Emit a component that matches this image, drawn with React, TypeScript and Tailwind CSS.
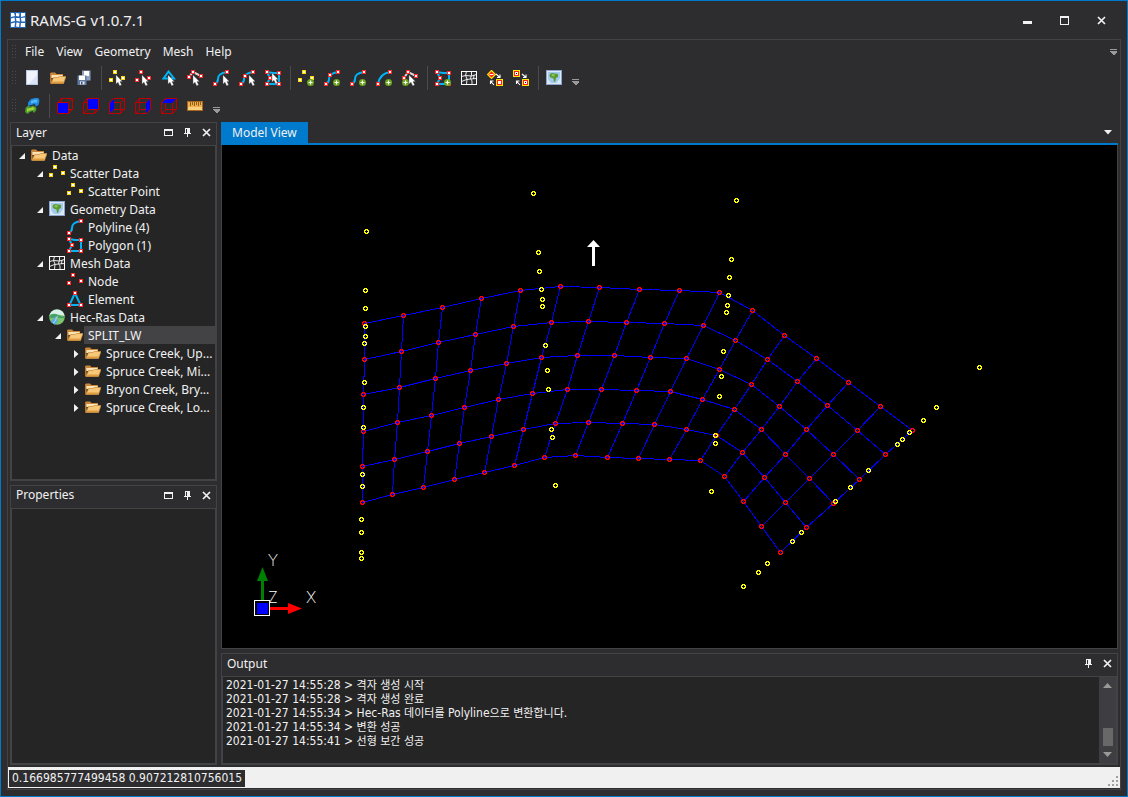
import React from "react";

type Point = [number, number];

const RED = "#ff2a2a";
const YELLOW = "#ffd700";
const CYAN = "#00b4f5";

// rows of mesh nodes, from the outer bank to the inner bank
const meshRows: Point[][] = [
  [[364, 323], [403, 315], [442, 307], [481, 298], [520, 290], [560, 286], [599, 287], [639, 289], [679, 290], [719, 292], [752, 310], [784, 335], [816, 358], [848, 382], [880, 406], [912, 430]],
  [[364, 359], [401, 351], [438, 342], [475, 334], [513, 326], [551, 322], [588, 321], [626, 322], [664, 323], [703, 325], [735, 340], [767, 359], [797, 381], [827, 405], [857, 430], [885, 454]],
  [[363, 394], [399, 387], [435, 378], [470, 370], [506, 363], [541, 357], [577, 355], [614, 355], [650, 357], [686, 358], [719, 369], [751, 384], [779, 406], [806, 429], [833, 454], [859, 479]],
  [[363, 431], [397, 422], [431, 415], [464, 407], [498, 399], [532, 393], [567, 389], [601, 389], [636, 390], [670, 391], [702, 399], [734, 409], [761, 429], [785, 454], [809, 478], [833, 503]],
  [[362, 466], [394, 459], [427, 451], [459, 443], [491, 436], [523, 429], [555, 423], [588, 422], [622, 423], [654, 424], [686, 429], [716, 435], [742, 452], [764, 477], [785, 502], [806, 527]],
  [[362, 502], [392, 494], [423, 487], [454, 479], [484, 472], [514, 465], [544, 457], [575, 455], [607, 457], [638, 458], [669, 459], [700, 460], [724, 476], [743, 501], [761, 526], [780, 552]],
];

const scatterPoints: Point[] = [
  [366, 231], [365, 290], [365, 308], [365, 326], [365, 336], [364, 343], [364, 382], [363, 407], [363, 427],
  [362, 474], [362, 486], [361, 519], [361, 532], [361, 552], [361, 558],
  [533, 193], [538, 252], [539, 271], [541, 289], [542, 299], [542, 306], [545, 345], [547, 370], [548, 389],
  [551, 429], [552, 437], [555, 485],
  [736, 200], [731, 259], [729, 277], [728, 295], [727, 305], [726, 312], [723, 351], [721, 376], [719, 396],
  [715, 435], [715, 443], [711, 491],
  [979, 367], [936, 407], [923, 420], [909, 432], [902, 439], [897, 444], [868, 470], [850, 487], [835, 501],
  [801, 532], [792, 541], [767, 563], [758, 572], [743, 586],
];

const toPoints = (line: Point[]) => line.map(([x, y]) => `${x + 0.5},${y + 0.5}`).join(" ");

/* ---------- icon parts ---------- */

const Svg = ({ children }: { children: React.ReactNode }) => (
  <svg viewBox="0 0 16 16" className="size-4 shrink-0" aria-hidden="true">
    {children}
  </svg>
);

const Dots = ({ at, color }: { at: Point[]; color: string }) => (
  <g shapeRendering="crispEdges">
    {at.map(([x, y]) => (
      <g key={`${x}-${y}`}>
        <rect x={x - 2} y={y - 2} width="4" height="4" fill={color} />
        <rect x={x - 1} y={y - 1} width="2" height="2" fill="#fff" />
      </g>
    ))}
  </g>
);

const Cursor = ({ x, y }: { x: number; y: number }) => (
  <path
    transform={`translate(${x} ${y})`}
    d="M0 0V9L2 7.3L3.6 10.8L5.6 10L4 6.6H6.4Z"
    fill="#fff"
    stroke="#555"
    strokeWidth="0.4"
  />
);

const Plus = ({ x = 12 }: { x?: number }) => (
  <g>
    <circle cx={x + 0.5} cy="12.5" r="3.5" fill="#69a51c" />
    <path d={`M${x + 0.5} 10.5V14.5M${x - 1.5} 12.5H${x + 2.5}`} stroke="#fff" strokeWidth="1.2" />
  </g>
);

const Line = ({ d, color = CYAN }: { d: string; color?: string }) => (
  <path d={d} fill="none" stroke={color} strokeWidth="2" />
);

const S_CURVE = "M2 14C4 13 5 12 5 9C5 5 7 3 14 2";
const POLYGON = "M2 2L8 3L14 3V14H2L5 8Z";
const scatterAt: Point[] = [[6, 2], [2, 10], [14, 8]];
const polygonAt: Point[] = [[2, 2], [14, 3], [5, 8], [2, 14], [14, 14]];

const FolderIcon = () => (
  <Svg>
    <path d="M0 3.5L1 2.5H5L6.5 4H13V7H0Z" fill="#c9873c" />
    <path d="M1 5H12.5V8H1Z" fill="#fbe3b4" />
    <path d="M0 3.5V13.5H2L1.3 5Z" fill="#b9762e" />
    <path d="M3.5 7.5H8L9.5 6.5H16L13.5 13.5H1Z" fill="#f6c877" stroke="#c88a3b" strokeWidth="0.7" />
    <path d="M2.5 11.5H14L13.4 13.2H1.6Z" fill="#df9c41" />
  </Svg>
);

const ScatterIcon = () => (
  <Svg>
    <Dots at={scatterAt} color={YELLOW} />
  </Svg>
);

const MapIcon = () => (
  <Svg>
    <rect x="0.5" y="0.5" width="15" height="14" fill="#dfe9f5" stroke="#8ba5cc" />
    <rect x="2" y="2" width="12" height="11" fill="#a3c9ec" />
    <path d="M2 9L5 13H2ZM10 13L14 8V13Z" fill="#cfe8fa" />
    <path d="M4 4L6 3L9 3.5L12 4L12 7L10 8L9.5 11L8 12L7.5 8.5L4.5 7.5L3.5 6Z" fill="#5b9c31" />
    <path d="M6 4L9 4.5L8 6.5L5.5 6Z" fill="#93c258" />
  </Svg>
);

const PolylineIcon = () => (
  <Svg>
    <Line d={S_CURVE} />
    <Dots at={[[2, 14], [14, 2]]} color={RED} />
  </Svg>
);

const PolygonIcon = () => (
  <Svg>
    <Line d={POLYGON} />
    <Dots at={polygonAt} color={RED} />
  </Svg>
);

const MeshIcon = () => (
  <Svg>
    <rect x="0.5" y="1.5" width="15" height="13" fill="none" stroke="#fff" />
    <path
      d="M5.5 1.5L4.5 5.5L6 9L5.5 14.5M10.5 1.5V5L9.5 8.5L11 11V14.5M0.5 6.5L4.5 5.5L10.5 6L15.5 4.5M0.5 11.5L5.5 9.5L9.5 9L15.5 8.5M13 5L12.5 9"
      fill="none"
      stroke="#fff"
      strokeWidth="0.9"
    />
  </Svg>
);

const NodeIcon = () => (
  <Svg>
    <Dots at={scatterAt} color={RED} />
  </Svg>
);

const ElementIcon = () => (
  <Svg>
    <Line d="M8 2L2.5 14H13.5Z" />
    <Dots at={[[8, 2], [2, 14], [14, 14]]} color={RED} />
  </Svg>
);

const RiverIcon = () => (
  <Svg>
    <circle cx="8" cy="8" r="7.8" fill="#7cc36e" />
    <path d="M0.3 7A7.8 7.8 0 0 1 15.7 7Q8 4 0.3 7Z" fill="#d9f1ea" />
    <path d="M1 6Q5 3.5 9 6T15.6 6.5V9H0.5Z" fill="#46a360" />
    <path d="M11.5 7Q6 8 8 10T6 15.7L1.5 12.5Q5 10 5.5 8.5T11.5 7Z" fill="#59a9e0" />
    <path d="M9 7.6Q6.5 8.5 7 10T4 14.2" fill="none" stroke="#cdeaff" strokeWidth="0.8" />
  </Svg>
);

const NewIcon = () => (
  <Svg>
    <rect x="2.5" y="0.5" width="11" height="14" fill="#f1f5fd" stroke="#b9c9e6" />
    <path d="M5 14L13 5V14Z" fill="#dbe4f6" />
  </Svg>
);

const SaveIcon = () => (
  <Svg>
    <path d="M6 0.5H14.5V10.5H6Z" fill="#8ea0c0" />
    <rect x="8" y="1" width="5" height="5" fill="#fff" />
    <path d="M1.5 5.5H10.5V15H1.5Z" fill="#61789f" />
    <rect x="3" y="5.5" width="6" height="4.5" fill="#fff" />
    <rect x="4" y="11.5" width="4.5" height="3" fill="#dfe6f2" />
    <rect x="5" y="12" width="1.5" height="2.5" fill="#3d4e6e" />
  </Svg>
);

const SelectScatterIcon = () => (
  <Svg>
    <Dots at={scatterAt} color={YELLOW} />
    <Cursor x={7} y={5} />
  </Svg>
);

const SelectNodeIcon = () => (
  <Svg>
    <Dots at={scatterAt} color={RED} />
    <Cursor x={7} y={5} />
  </Svg>
);

const SelectElementIcon = () => (
  <Svg>
    <Line d="M7.5 1.5L2.5 8.5H13Z" />
    <Cursor x={7} y={5} />
  </Svg>
);

const SelectEdgeIcon = () => (
  <Svg>
    <Line d="M2 7L6 2L14 6" color="#d5d5d5" />
    <Dots at={[[2, 7], [6, 2], [14, 6]]} color={RED} />
    <Cursor x={6} y={5} />
  </Svg>
);

const SelectPolylineIcon = () => (
  <Svg>
    <Line d={S_CURVE} />
    <Dots at={[[2, 14], [14, 2]]} color={RED} />
    <Cursor x={10} y={5} />
  </Svg>
);

const SelectVertexIcon = () => (
  <Svg>
    <Line d={S_CURVE} />
    <Dots at={[[2, 14], [6, 6], [14, 2]]} color={RED} />
    <Cursor x={10} y={5} />
  </Svg>
);

const SelectPolygonIcon = () => (
  <Svg>
    <Line d={POLYGON} />
    <Dots at={polygonAt} color={RED} />
    <Cursor x={7} y={3} />
  </Svg>
);

const AddScatterIcon = () => (
  <Svg>
    <Dots at={scatterAt} color={YELLOW} />
    <Plus />
  </Svg>
);

const AddVertexIcon = () => (
  <Svg>
    <Line d={S_CURVE} />
    <Dots at={[[2, 14], [6, 5], [14, 2]]} color={RED} />
    <Plus />
  </Svg>
);

const AddPolylineIcon = () => (
  <Svg>
    <Line d={S_CURVE} />
    <Dots at={[[2, 14], [14, 2]]} color={RED} />
    <Plus />
  </Svg>
);

const AddArcIcon = () => (
  <Svg>
    <Line d="M2 14C3 8 7 3 14 2" />
    <Dots at={[[2, 14], [14, 2]]} color={RED} />
    <Plus />
  </Svg>
);

const AddEdgeIcon = () => (
  <Svg>
    <Line d="M2 8L6 2L14 6" color="#d5d5d5" />
    <Dots at={[[2, 8], [6, 2], [14, 6]]} color={RED} />
    <Plus x={3} />
    <Cursor x={7} y={5} />
  </Svg>
);

const AddPolygonIcon = () => (
  <Svg>
    <Line d={POLYGON} />
    <Dots at={polygonAt} color={RED} />
    <Plus />
  </Svg>
);

const SwapArrows = () => (
  <path
    d="M9 4L13 7.5M13 4.5V7.5H10M7 15L3.5 11M3.5 14V11H6.5"
    fill="none"
    stroke="#fff"
    strokeWidth="1.1"
  />
);

const ElementToSquareIcon = () => (
  <Svg>
    <path d="M4.5 0.5L8.5 4.5L4.5 8.5L0.5 4.5Z" fill="#ff2020" stroke="#ffe600" strokeWidth="1.2" />
    <path d="M2.5 4.5H6.5" stroke="#fff" />
    <SwapArrows />
    <rect x="9.5" y="9.5" width="6" height="6" fill="#fff" stroke="#ffe600" />
    <rect x="10.5" y="10.5" width="4" height="4" fill="none" stroke="#ff2020" />
  </Svg>
);

const SquareToSquareIcon = () => (
  <Svg>
    <g shapeRendering="crispEdges">
      <rect x="0.5" y="0.5" width="6" height="6" fill="#fff" stroke="#ffe600" />
      <rect x="1.5" y="1.5" width="4" height="4" fill="none" stroke="#ff2020" />
      <rect x="3" y="3" width="1" height="1" fill="#000" />
      <rect x="9.5" y="9.5" width="6" height="6" fill="#fff" stroke="#ffe600" />
      <rect x="10.5" y="10.5" width="4" height="4" fill="none" stroke="#ff2020" />
      <rect x="12" y="12" width="1" height="1" fill="#000" />
    </g>
    <SwapArrows />
  </Svg>
);

const TerrainIcon = () => (
  <Svg>
    <path d="M4 4.5L7 1L11 0H14.5L15.5 3L14.5 7L12 8.5L10.5 6L7.5 7L4 8Z" fill="#1b8be0" />
    <path d="M7 3L11 1.5L13.5 2L13 5L10.5 4.5L7 5.5Z" fill="#58b6f4" />
    <path d="M1.5 10L3.5 8L7 8.5L9 7.5L12 9L12.5 12L10 15L8.5 13L6 14L3.5 16L1 14Z" fill="#4d9a2c" />
    <path d="M3 10.5L6.5 10L9 9L11 11L9 12L6 12.5L3 14Z" fill="#a4d23f" />
  </Svg>
);

const cubeFaces = {
  front: "M1 5H11V15H1Z",
  back: "M5 1H15V11H5Z",
  left: "M1 5L5 1V11L1 15Z",
  right: "M11 5L15 1V11L11 15Z",
  top: "M1 5L5 1H15L11 5Z",
};

const CubeIcon = ({ face }: { face: keyof typeof cubeFaces }) => (
  <Svg>
    <path
      d="M0.5 4.5H11.5V15.5H0.5ZM4.5 0.5H15.5V11.5H4.5ZM0.5 4.5L4.5 0.5M11.5 4.5L15.5 0.5M11.5 15.5L15.5 11.5M0.5 15.5L4.5 11.5"
      fill="none"
      stroke="#c00000"
    />
    <path d={cubeFaces[face]} fill="#0000ff" />
  </Svg>
);

const RulerIcon = () => (
  <Svg>
    <rect x="0.5" y="3.5" width="15" height="9" fill="#eeb04c" stroke="#a9681c" />
    <rect x="1" y="9" width="14" height="3" fill="#f9d080" />
    <path d="M3.5 4V8M5.5 4V7M7.5 4V8M9.5 4V7M11.5 4V8M13.5 4V7" stroke="#8a5414" strokeWidth="0.9" />
  </Svg>
);

const AppIcon = () => (
  <Svg>
    <rect width="16" height="16" fill="#2465b5" />
    <path
      d="M1 1H4L5 4L1 5ZM6 1L9.5 1.5L9 4.500L6 4ZM11 1H15V4L11 5ZM1 6.500L4.500 5.500L5 9L1 10ZM6 6L9.500 6L10 9.500L6.500 9ZM11 6L15 5.500V9.500L11.500 9.500ZM1 11.500L5 10.500L4.500 15H1ZM6.500 10.500L9.500 11L9 15L6 14.500ZM11 11L15 11V15H10.500Z"
      fill="#fff"
    />
  </Svg>
);

/* ---------- small window glyphs ---------- */

const CloseGlyph = () => (
  <svg viewBox="0 0 9 9" className="size-[9px]" aria-hidden="true">
    <path d="M1 1L8 8M8 1L1 8" stroke="#f1f1f1" strokeWidth="1.7" />
  </svg>
);

const MaximizeGlyph = () => (
  <svg viewBox="0 0 9 9" className="size-[9px]" shapeRendering="crispEdges" aria-hidden="true">
    <path d="M0 0H9V9H0ZM1 2V8H8V2Z" fill="#f1f1f1" fillRule="evenodd" />
  </svg>
);

const MinimizeGlyph = () => (
  <svg viewBox="0 0 9 9" className="size-[9px]" shapeRendering="crispEdges" aria-hidden="true">
    <path d="M0 5H9V8H0Z" fill="#f1f1f1" />
  </svg>
);

const RestoreGlyph = () => (
  <svg viewBox="0 0 9 9" className="size-[9px]" shapeRendering="crispEdges" aria-hidden="true">
    <path d="M0 1H9V8H0ZM1 3V7H8V3Z" fill="#f1f1f1" fillRule="evenodd" />
  </svg>
);

const PinGlyph = () => (
  <svg viewBox="0 0 9 9" className="size-[9px]" shapeRendering="crispEdges" aria-hidden="true">
    <path d="M2 0H7V5H8V6H5V9H4V6H1V5H2ZM3 1V5H4V1Z" fill="#f1f1f1" fillRule="evenodd" />
  </svg>
);

const OverflowGlyph = () => (
  <svg viewBox="0 0 7 7" className="size-[7px]" shapeRendering="crispEdges" aria-hidden="true">
    <path d="M0 0H7V1H0ZM0 2H7V3L4 6H3L0 3Z" fill="#999" />
  </svg>
);

/* ---------- toolbars ---------- */

type Tool = { label: string; icon: React.ReactNode };

const mainTools: Tool[][] = [
  [
    { label: "New", icon: <NewIcon /> },
    { label: "Open", icon: <FolderIcon /> },
    { label: "Save", icon: <SaveIcon /> },
  ],
  [
    { label: "Select scatter point", icon: <SelectScatterIcon /> },
    { label: "Select node", icon: <SelectNodeIcon /> },
    { label: "Select element", icon: <SelectElementIcon /> },
    { label: "Select edge", icon: <SelectEdgeIcon /> },
    { label: "Select polyline", icon: <SelectPolylineIcon /> },
    { label: "Select vertex", icon: <SelectVertexIcon /> },
    { label: "Select polygon", icon: <SelectPolygonIcon /> },
  ],
  [
    { label: "Add scatter point", icon: <AddScatterIcon /> },
    { label: "Add vertex", icon: <AddVertexIcon /> },
    { label: "Add polyline", icon: <AddPolylineIcon /> },
    { label: "Add arc", icon: <AddArcIcon /> },
    { label: "Add edge", icon: <AddEdgeIcon /> },
  ],
  [
    { label: "Add polygon", icon: <AddPolygonIcon /> },
    { label: "Generate mesh", icon: <MeshIcon /> },
    { label: "Element to node", icon: <ElementToSquareIcon /> },
    { label: "Node to node", icon: <SquareToSquareIcon /> },
  ],
  [{ label: "Background map", icon: <MapIcon /> }],
];

const viewTools: Tool[][] = [
  [{ label: "Terrain", icon: <TerrainIcon /> }],
  [
    { label: "Front view", icon: <CubeIcon face="front" /> },
    { label: "Back view", icon: <CubeIcon face="back" /> },
    { label: "Left view", icon: <CubeIcon face="left" /> },
    { label: "Right view", icon: <CubeIcon face="right" /> },
    { label: "Top view", icon: <CubeIcon face="top" /> },
    { label: "Measure", icon: <RulerIcon /> },
  ],
];

const Grip = () => (
  <div className="flex w-[11px] shrink-0 justify-center">
    <div className="h-4 w-[5px] bg-[radial-gradient(#4a4a4e_35%,transparent_40%)] bg-size-[3px_3px]" />
  </div>
);

const Toolbar = ({ groups }: { groups: Tool[][] }) => (
  <div role="toolbar" className="flex h-7 shrink-0 items-center">
    <Grip />
    {groups.map((group, i) => (
      <div key={i} className="flex items-center">
        {i > 0 && <div className="ml-1 mr-0.5 h-6 w-px bg-[#4a4a4e]" />}
        {group.map((tool) => (
          <button
            key={tool.label}
            aria-label={tool.label}
            className="flex h-6 w-[26px] items-center justify-center hover:bg-[#3e3e40]"
          >
            {tool.icon}
          </button>
        ))}
      </div>
    ))}
    <button aria-label="Toolbar options" className="flex h-6 w-4 items-end justify-center pb-1">
      <OverflowGlyph />
    </button>
  </div>
);

/* ---------- docked panels ---------- */

type PanelProps = {
  title: string;
  className: string;
  restore?: boolean;
  children?: React.ReactNode;
};

const panelButton = "flex h-5 w-[19px] items-center justify-center hover:bg-[#3e3e40]";

const Panel = ({ title, className, restore, children }: PanelProps) => (
  <section className={`flex min-h-0 flex-col border border-[#434346] ${className}`}>
    <header className="flex h-[22px] shrink-0 items-center justify-between pb-[3px] pl-[5px]">
      <h2>{title}</h2>
      <div className="flex">
        {restore && (
          <button aria-label={`Maximize ${title}`} className={panelButton}>
            <RestoreGlyph />
          </button>
        )}
        <button aria-label={`Pin ${title}`} className={panelButton}>
          <PinGlyph />
        </button>
        <button aria-label={`Close ${title}`} className={panelButton}>
          <CloseGlyph />
        </button>
      </div>
    </header>
    <div className="flex min-h-0 grow border border-[#434346] bg-[#252526]">{children}</div>
  </section>
);

type TreeRow = {
  level: 0 | 1 | 2 | 3;
  label: string;
  icon: React.ReactNode;
  state?: "open" | "closed";
  selected?: boolean;
};

const treeRows: TreeRow[] = [
  { level: 0, label: "Data", icon: <FolderIcon />, state: "open" },
  { level: 1, label: "Scatter Data", icon: <ScatterIcon />, state: "open" },
  { level: 2, label: "Scatter Point", icon: <ScatterIcon /> },
  { level: 1, label: "Geometry Data", icon: <MapIcon />, state: "open" },
  { level: 2, label: "Polyline (4)", icon: <PolylineIcon /> },
  { level: 2, label: "Polygon (1)", icon: <PolygonIcon /> },
  { level: 1, label: "Mesh Data", icon: <MeshIcon />, state: "open" },
  { level: 2, label: "Node", icon: <NodeIcon /> },
  { level: 2, label: "Element", icon: <ElementIcon /> },
  { level: 1, label: "Hec-Ras Data", icon: <RiverIcon />, state: "open" },
  { level: 2, label: "SPLIT_LW", icon: <FolderIcon />, state: "open", selected: true },
  { level: 3, label: "Spruce Creek, Up...", icon: <FolderIcon />, state: "closed" },
  { level: 3, label: "Spruce Creek, Mi...", icon: <FolderIcon />, state: "closed" },
  { level: 3, label: "Bryon Creek, Bry...", icon: <FolderIcon />, state: "closed" },
  { level: 3, label: "Spruce Creek, Lo...", icon: <FolderIcon />, state: "closed" },
];

const indent = ["pl-px", "pl-[19px]", "pl-[37px]", "pl-[55px]"];

const LayerTree = () => (
  <ul role="tree" className="min-w-0 grow">
    {treeRows.map((row) => (
      <li
        key={row.label}
        role="treeitem"
        aria-selected={!!row.selected}
        aria-expanded={row.state ? row.state === "open" : undefined}
        className={`flex h-[18px] items-center ${indent[row.level]}`}
      >
        <span className="flex w-[18px] shrink-0 justify-center pt-0.5">
          {row.state && (
            <svg viewBox="0 0 8 8" className="size-2" aria-hidden="true">
              <path d={row.state === "open" ? "M7 1V7H1Z" : "M2 0L6.5 4L2 8Z"} fill="#f1f1f1" />
            </svg>
          )}
        </span>
        {row.icon}
        <span
          className={`ml-px h-[18px] min-w-0 grow overflow-hidden whitespace-nowrap pl-1 leading-5 ${row.selected ? "bg-[#434346]" : ""}`}
        >
          {row.label}
        </span>
      </li>
    ))}
  </ul>
);

// 5px ring on whole pixels
const RING = "M-1-2H2V-1H3V2H2V3H-1V2H-2V-1H-1ZM0-1V0H-1V1H0V2H1V1H2V0H1V-1Z";

const Rings = ({ at, color }: { at: Point[]; color: string }) => (
  <g fill={color} fillRule="evenodd" shapeRendering="crispEdges">
    {at.map(([x, y], i) => (
      <path key={i} d={RING} transform={`translate(${x} ${y})`} />
    ))}
  </g>
);

const ModelView = () => (
  <svg
    viewBox="222 145 895 503"
    preserveAspectRatio="xMinYMin meet"
    className="size-full"
    role="img"
    aria-label="Mesh model"
  >
    <g fill="none" stroke="#0000ff" shapeRendering="crispEdges">
      {meshRows.map((row, i) => (
        <polyline key={i} points={toPoints(row)} />
      ))}
      {meshRows[0].map((_, col) => (
        <polyline key={col} points={toPoints(meshRows.map((row) => row[col]))} />
      ))}
    </g>
    <Rings at={meshRows.flat()} color="#ff0000" />
    <Rings at={scatterPoints} color="#ffff00" />

    {/* flow direction */}
    <path d="M592 266V247H587L593.5 240L600 247H595V266Z" fill="#fff" />

    {/* axis triad */}
    <path d="M262.5 600V580" stroke="#008000" strokeWidth="3" />
    <path d="M262.5 567L268 581H257Z" fill="#008000" />
    <path d="M270 608.5H289" stroke="#ff0000" strokeWidth="3" />
    <path d="M302 608.5L288 603V614Z" fill="#ff0000" />
    <rect x="254.5" y="600.5" width="15" height="15" fill="#000" stroke="#fff" />
    <rect x="257" y="603" width="11" height="11" fill="#0000ff" />
    <g fill="#fff" className="font-['Inter'] text-[16px] font-extralight" textAnchor="middle">
      <text x="273" y="566">Y</text>
      <text x="273" y="603">Z</text>
      <text x="311" y="603">X</text>
    </g>
  </svg>
);

const logLines = [
  "2021-01-27 14:55:28 > 격자 생성 시작",
  "2021-01-27 14:55:28 > 격자 생성 완료",
  "2021-01-27 14:55:34 > Hec-Ras 데이터를 Polyline으로 변환합니다.",
  "2021-01-27 14:55:34 > 변환 성공",
  "2021-01-27 14:55:41 > 선형 보간 성공",
];

// Hangul is set smaller than the Latin text
const LogLine = ({ text }: { text: string }) => (
  <p className="h-3.5 whitespace-nowrap leading-[14px]">
    {text.split(/([가-힣]+)/).map((part, i) =>
      i % 2 ? (
        <span key={i} className="text-[11px]">
          {part}
        </span>
      ) : (
        part
      ),
    )}
  </p>
);

const App: React.FC = () => {
  return (
    <div className="flex h-screen flex-col border border-[#007acc] bg-[#2d2d30] px-1.5 pb-1.5 font-['Noto_Sans','Noto_Sans_CJK_KR',sans-serif] text-[12px] leading-4 text-[#f1f1f1]">
      <header className="flex h-[38px] shrink-0 items-center gap-1 pl-[3px] pr-px">
        <AppIcon />
        <h1 className="grow text-[15px] leading-5">RAMS-G v1.0.7.1</h1>
        <div className="flex">
          <button aria-label="Minimize" className="flex h-7 w-[37px] items-center justify-center">
            <MinimizeGlyph />
          </button>
          <button aria-label="Maximize" className="flex h-7 w-[37px] items-center justify-center">
            <MaximizeGlyph />
          </button>
          <button aria-label="Close" className="flex h-7 w-[37px] items-center justify-center">
            <CloseGlyph />
          </button>
        </div>
      </header>

      <div className="flex min-h-0 grow flex-col border border-[#434346] pb-px">
        <nav className="flex h-6 shrink-0 items-center">
          <Grip />
          {["File", "View", "Geometry", "Mesh", "Help"].map((item) => (
            <button key={item} className="px-1.5 hover:bg-[#3e3e40]">
              {item}
            </button>
          ))}
          <button aria-label="Menu options" className="ml-auto flex w-3.5 justify-center">
            <OverflowGlyph />
          </button>
        </nav>
        <Toolbar groups={mainTools} />
        <Toolbar groups={viewTools} />

        <main className="flex min-h-0 grow gap-1 px-0.5 py-0.5">
          <aside className="flex w-[207px] shrink-0 flex-col gap-1">
            <Panel title="Layer" className="flex-[359]" restore>
              <LayerTree />
            </Panel>
            <Panel title="Properties" className="flex-[280]" restore />
          </aside>

          <div className="flex min-w-0 grow flex-col gap-1">
            <section className="flex min-h-0 grow flex-col">
              <div role="tablist" className="flex h-[23px] shrink-0 items-center justify-between border-b-2 border-[#007acc]">
                <button role="tab" aria-selected="true" className="h-full bg-[#007acc] px-[11px]">
                  Model View
                </button>
                <button aria-label="Open documents" className="flex w-5 justify-center">
                  <svg viewBox="0 0 8 5" className="h-[5px] w-2" aria-hidden="true">
                    <path d="M0 0H8L4 4.5Z" fill="#f1f1f1" />
                  </svg>
                </button>
              </div>
              <div className="min-h-0 grow border-x border-b border-[#434346] bg-black">
                <ModelView />
              </div>
            </section>

            <Panel title="Output" className="h-28 shrink-0">
              <div className="min-w-0 grow overflow-hidden pl-[3px] pt-px font-['DejaVu_Sans_Condensed','Noto_Sans_CJK_KR',sans-serif]">
                {logLines.map((line, i) => (
                  <LogLine key={i} text={line} />
                ))}
              </div>
              <div className="flex w-[17px] shrink-0 flex-col items-center bg-[#3e3e42] py-1.5">
                <svg viewBox="0 0 9 5" className="h-[5px] w-[9px]" aria-hidden="true">
                  <path d="M0 5L4.5 0L9 5Z" fill="#999" />
                </svg>
                <div className="mb-1.5 mt-auto h-[18px] w-2.5 bg-[#686868]" />
                <svg viewBox="0 0 9 5" className="h-[5px] w-[9px]" aria-hidden="true">
                  <path d="M0 0H9L4.5 5Z" fill="#999" />
                </svg>
              </div>
            </Panel>
          </div>
        </main>

        <footer className="flex h-[21px] shrink-0 items-end justify-between bg-[#f0f0f0] pb-px pl-px">
          <output className="h-[17px] whitespace-nowrap bg-[#2d2d30] px-[3px] font-['DejaVu_Sans_Condensed',sans-serif] leading-[17px]">
            0.166985777499458 0.907212810756015
          </output>
          <svg viewBox="0 0 12 12" className="size-3" shapeRendering="crispEdges" aria-hidden="true">
            <path d="M8 1h2v2h-2zM8 5h2v2h-2zM8 9h2v2h-2zM4 5h2v2h-2zM4 9h2v2h-2zM0 9h2v2h-2z" fill="#a0a0a0" />
          </svg>
        </footer>
      </div>
    </div>
  );
};

export default App;
